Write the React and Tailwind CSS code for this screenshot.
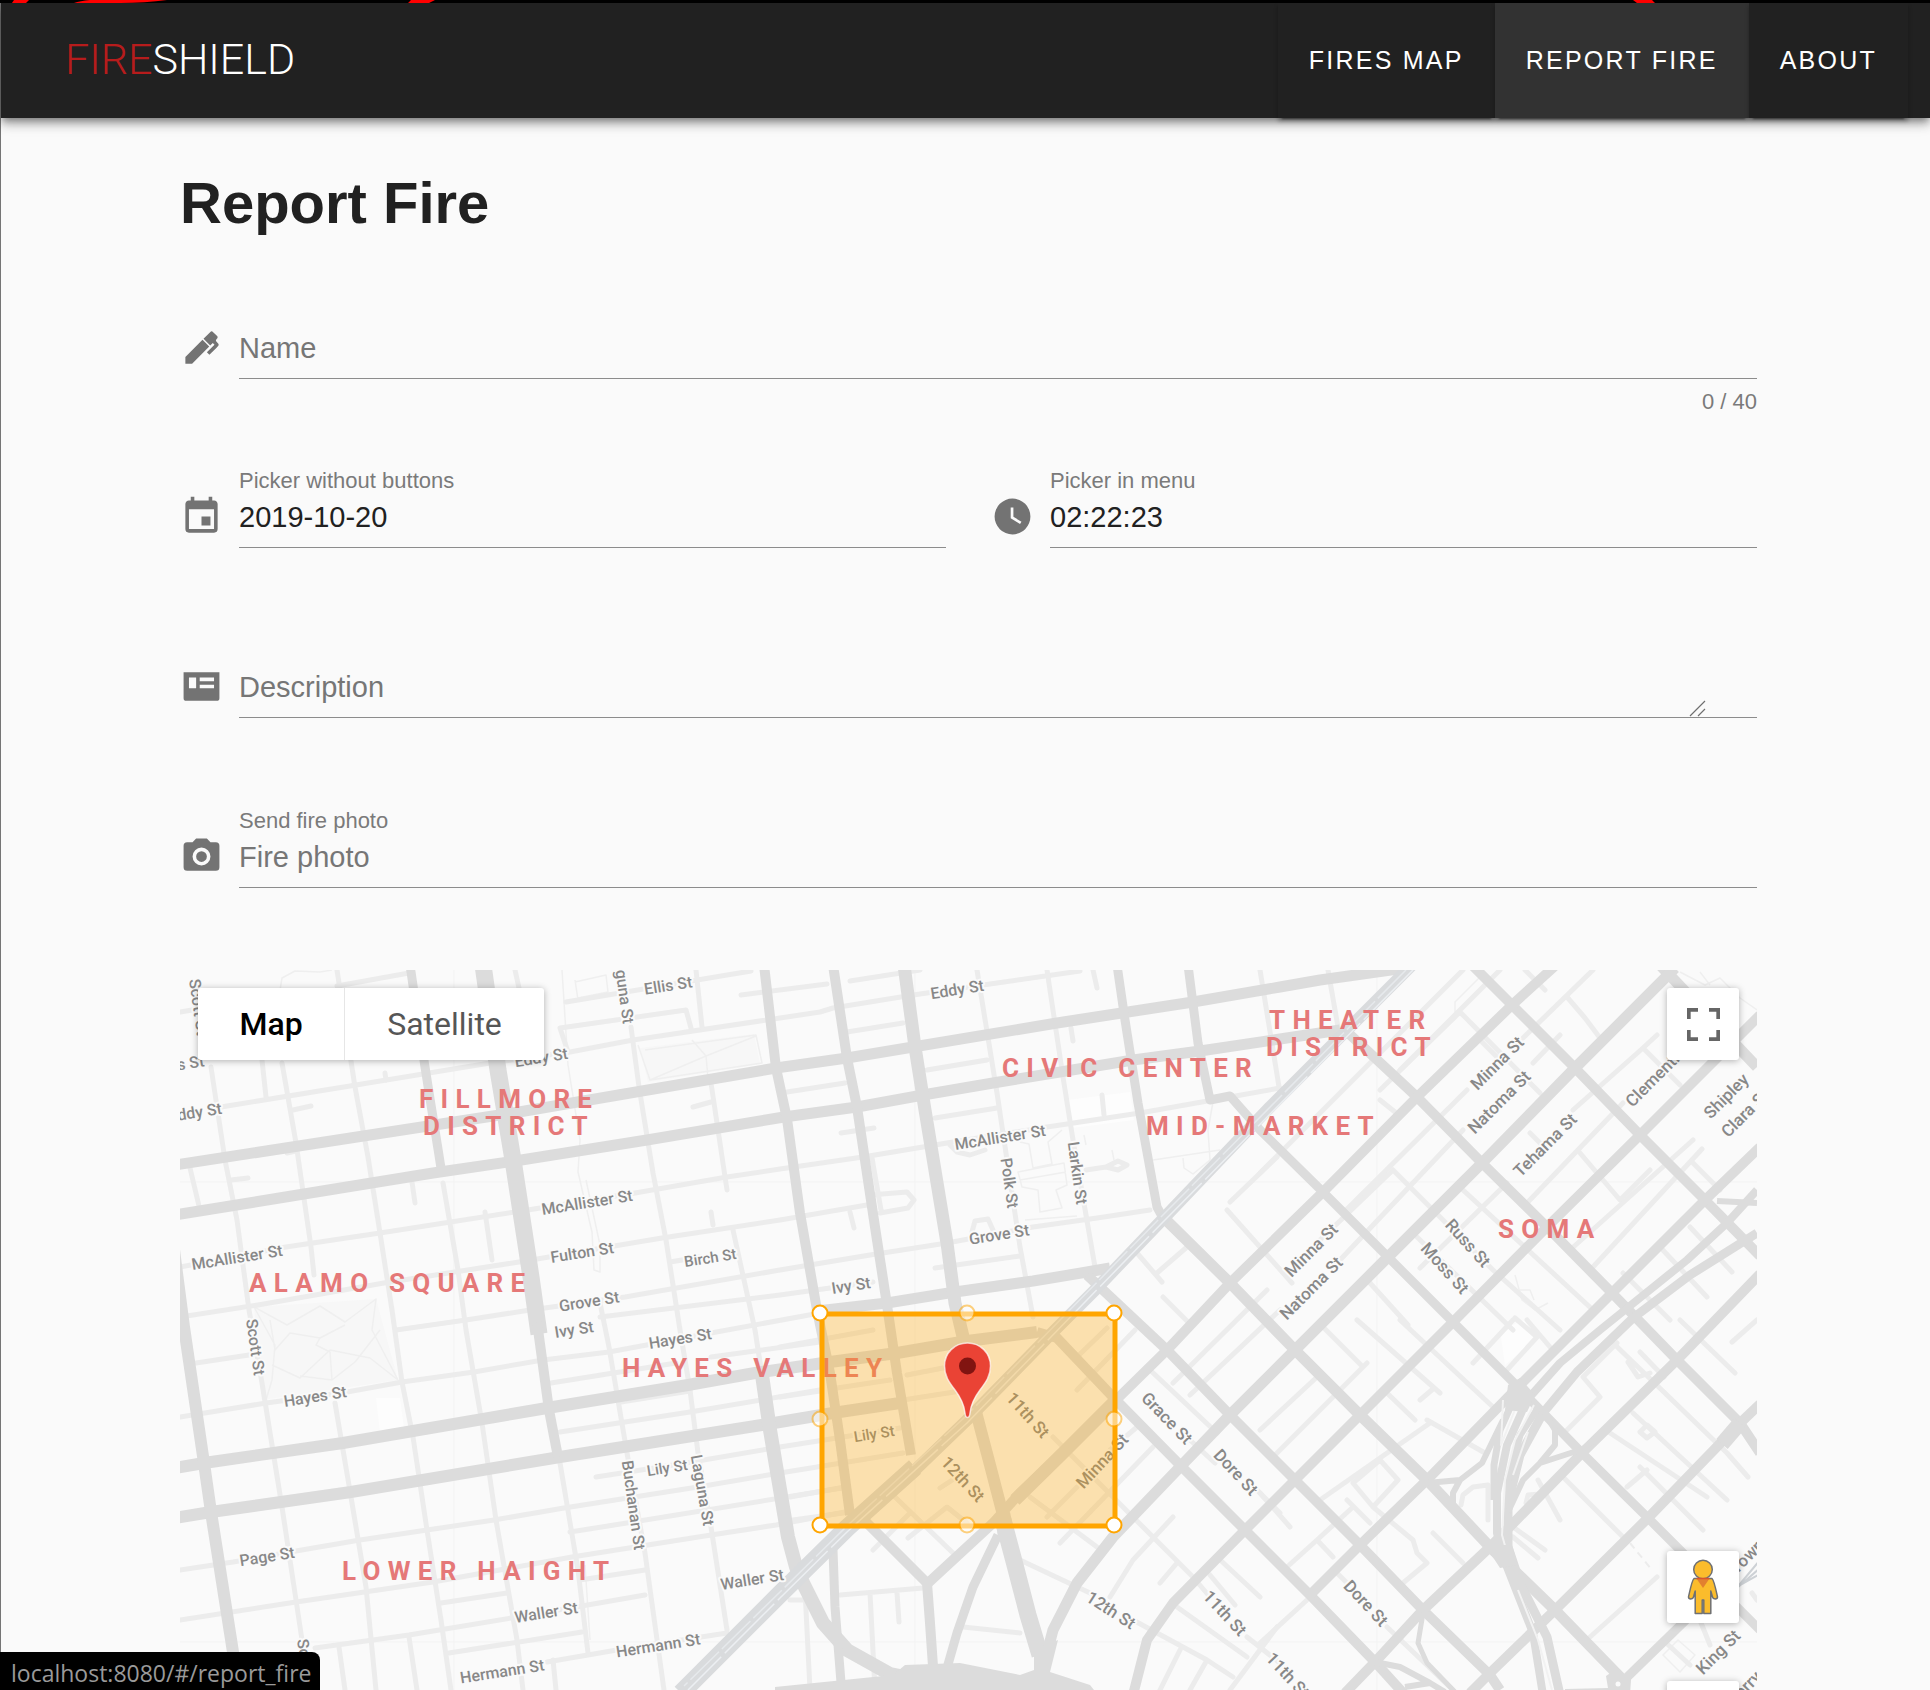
import React from "react";

const ARIAL = "font-['Liberation_Sans',Arial,sans-serif]";

/* ---------- form ---------- */

const ICONS = {
  pen: "M20.71,7.04C20.37,7.38 20.04,7.71 20.03,8.04C20,8.36 20.34,8.69 20.66,9C21.14,9.5 21.61,9.95 21.59,10.44C21.57,10.93 21.06,11.44 20.55,11.94L16.42,16.08L15,14.66L19.25,10.42L18.29,9.46L16.87,10.87L13.12,7.12L16.96,3.29C17.35,2.9 18,2.9 18.37,3.29L20.71,5.63C21.1,6 21.1,6.65 20.71,7.04M3,17.25L12.56,7.68L16.31,11.43L6.75,21H3V17.25Z",
  calendar:
    "M19,19H5V8H19M16,1V3H8V1H6V3H5C3.89,3 3,3.89 3,5V19A2,2 0 0,0 5,21H19A2,2 0 0,0 21,19V5C21,3.89 20.1,3 19,3H18V1M17,12H12V17H17V12Z",
  clock:
    "M12,2A10,10 0 0,0 2,12A10,10 0 0,0 12,22A10,10 0 0,0 22,12A10,10 0 0,0 12,2M16.2,16.2L11,13V7H12.5V12.2L17,14.9L16.2,16.2Z",
  card: "M2 4H22V18.5A1.5 1.5 0 0 1 20.5 20H3.5A1.5 1.5 0 0 1 2 18.5ZM5 7V13H9V7ZM11 7V9H19V7ZM11 11V13H19V11Z",
  camera:
    "M4,4H7L9,2H15L17,4H20A2,2 0 0,1 22,6V18A2,2 0 0,1 20,20H4A2,2 0 0,1 2,18V6A2,2 0 0,1 4,4M12,7A5,5 0 0,0 7,12A5,5 0 0,0 12,17A5,5 0 0,0 17,12A5,5 0 0,0 12,7M12,9A3,3 0 0,1 15,12A3,3 0 0,1 12,15A3,3 0 0,1 9,12A3,3 0 0,1 12,9Z",
};

function Field({ icon, id, label, hint, children }) {
  return (
    <div className="flex gap-4">
      <svg viewBox="0 0 24 24" className="mt-[25px] size-[43px] shrink-0 text-[#737373]" aria-hidden="true">
        <path d={ICONS[icon]} fill="currentColor" fillRule="evenodd" />
      </svg>
      <div className="min-w-0 grow">
        <div className="h-[22px] text-[22px] leading-[22px] text-[#7a7a7a]">
          {label && <label htmlFor={id}>{label}</label>}
        </div>
        <div className="flex h-[56px] items-start border-b border-[#8c8c8c] pt-[5px]">{children}</div>
        {hint && <p className="mt-3 text-right text-[22px] leading-[22px] text-[#7a7a7a]">{hint}</p>}
      </div>
    </div>
  );
}

const INPUT =
  "block h-10 w-full min-w-0 bg-transparent text-[29px] leading-10 text-[#212121] outline-none placeholder:text-[#767676] placeholder:opacity-100";

/* ---------- map ---------- */

const MINOR = [
  "M180 1012L198 1009 M337 986L409 973 M566 1002L751 971 M221 1107L356 1085L490 1063L570 1052L633 1040L820 1012L833 1008L913 995L997 983L1080 971",
  "M560 1028L686 1010L691 1028 M560 1028L568 1052 M741 995L827 984 M850 981L920 970 M847 1032L903 1023 M787 1092L845 1083 M927 1070L987 1060 M935 1118L997 1108",
  "M180 1267L286 1247L380 1233L515 1212L635 1193L727 1177L780 1169L863 1157L947 1143L1047 1127L1140 1113L1213 1100L1280 1088",
  "M180 1317L258 1305L384 1283L519 1262L662 1238L780 1220L867 1205",
  "M196 1363L249 1355 M396 1330L466 1320L530 1310L625 1297L780 1270L870 1255L947 1243L1033 1227L1097 1218L1150 1210",
  "M600 1317L780 1295L873 1282 M670 1262L700 1257",
  "M180 1417L266 1403L347 1392L402 1382L474 1372L543 1360L609 1352L711 1333L820 1313",
  "M551 1383L676 1363 M560 1432L690 1412L820 1390 M621 1402L690 1391 M711 1357L820 1342 M596 1477L686 1463L780 1447L900 1428",
  "M180 1570L233 1562L290 1552L360 1540L494 1520L564 1508L698 1487L780 1473L903 1453 M570 1532L633 1522L848 1487",
  "M180 1620L296 1602L433 1582L572 1557L711 1535L776 1525L845 1512",
  "M315 1648L409 1635L511 1618L576 1607L645 1595 M441 1603L507 1593 M580 1580L645 1570 M449 1653L582 1632 M547 1662L617 1650L727 1633",
  "M211 1067L225 1160L237 1220L249 1310L262 1383L282 1507L296 1600L302 1640 M262 1060L266 1097 M190 1168L199 1206 M282 1063L296 1143L311 1247L314 1275",
  "M337 970L355 1087L368 1157L380 1233L392 1310L402 1382L413 1437L427 1530L441 1620L451 1690",
  "M443 1183L458 1270L466 1330L482 1423L496 1520L507 1583L517 1640L523 1690 M335 1403L351 1497L366 1587L376 1690 M560 1463L578 1570L588 1653",
  "M485 1212L492 1260 M412 1182L415 1203 M287 1153L296 1151 M231 1180L248 1178 M293 1110L311 1106 M385 1073L386 1080",
  "M631 1027L639 1087L653 1173L666 1240L680 1330L690 1390L698 1453L711 1527L727 1630 M600 1303L609 1347L627 1453L645 1553L664 1690",
  "M696 970L702 1027 M711 1083L727 1190 M733 1230L755 1330L762 1375 M515 970L519 988 M711 1212L713 1225 M693 1107L711 1102",
  "M977 970L997 1093L1020 1247L1033 1317 M1047 970L1063 1077L1073 1140L1095 1267 M1260 970L1280 1093 M1093 970L1097 988 M1071 1028L1073 1041 M1328 970L1338 1027",
  "M339 1647L345 1690 M409 1637L417 1690 M553 1660L556 1690 M805 1590L810 1690 M870 1593L875 1690 M897 1593L899 1622 M840 1595L923 1588 M963 1627L1020 1633 M790 1600L815 1600",
  "M841 1133L874 1128 M850 1212L854 1228 M870 1195L907 1192L914 1200L908 1208L880 1213 M872 1158L881 1210 M950 1145L957 1152L970 1155L985 1150 M972 1232L975 1221L988 1219L993 1230 M935 1268L1020 1256 M1102 1095L1104 1115 M1086 1170L1106 1167L1118 1161L1127 1165L1118 1170L1106 1167",
  "M780 1347L873 1330 M780 1397L820 1391 M837 1388L890 1380 M907 1375L943 1368 M903 1400L967 1390 M790 1497L845 1487 M793 1520L843 1513",
  "M1260 1173L1463 970 M1380 1090L1460 1012L1540 1093 M1343 1213L1467 1090 M1523 1038L1593 970 M1340 1260L1463 1130 M1533 1063L1560 1035 M1573 1110L1643 1048L1657 1035 M1643 1048L1680 1085",
  "M1507 1183L1420 1268 M1527 1203L1623 1103 M1570 1250L1693 1140 M1593 1267L1702 1149 M1393 1170L1493 1270L1560 1330 M1463 1190L1593 1310 M1393 1170L1320 1240 M1417 1237L1513 1330",
  "M1567 997L1585 1018L1600 1038 M1580 1153L1620 1200L1650 1170 M1693 1163L1720 1190 M1370 1283L1408 1325 M1623 1273L1670 1320 M1660 1247L1707 1297 M1690 1227L1732 1272 M1227 1210L1292 1283 M1137 1253L1162 1282 M1157 1273L1187 1247 M1277 1157L1230 1202 M1163 1297L1188 1322 M1500 970L1400 1070 M1380 1100L1395 1112 M1525 970L1545 990 M1480 1040L1497 1057 M1530 1133L1545 1148",
  "M1323 1327L1363 1367 M1260 1430L1317 1377 M1273 1457L1367 1363 M1357 1320L1440 1393 M1420 1400L1433 1389 M1400 1320L1493 1407 M1387 1393L1415 1420 M1320 1500L1430 1423 M1427 1420L1485 1453 M1473 1363L1513 1320 M1507 1370L1537 1337L1515 1318 M1527 1320L1550 1347",
  "M1563 1477L1623 1537 M1538 1480L1560 1520 M1513 1527L1545 1550 M1513 1537L1538 1558 M1590 1637L1657 1577 M1567 1430L1600 1397L1583 1377L1617 1343 M1610 1340L1727 1453L1748 1477 M1633 1413L1727 1500 M1610 1433L1707 1497 M1627 1487L1647 1470 M1640 1467L1703 1530 M1680 1320L1735 1373 M1732 1342L1757 1320 M1640 1352L1664 1377 M1628 1362L1638 1377L1650 1373",
  "M1347 1500L1370 1523 M1353 1483L1380 1460L1398 1480L1373 1507Z M1373 1507L1413 1540L1417 1553L1427 1563L1403 1583 M1433 1533L1463 1563 M1287 1567L1317 1540L1353 1507 M1317 1540L1333 1557 M1260 1643L1307 1600 M1337 1573L1347 1583 M1387 1627L1453 1690 M1260 1493L1290 1527 M1461 1505L1463 1495L1473 1487L1488 1485L1488 1520 M1640 1432L1647 1425L1655 1432L1647 1438Z M1526 1503L1528 1495L1540 1494 M1663 1640L1690 1665 M1695 1608L1710 1645 M1752 1593L1757 1600",
  "M1150 1370L1217 1433 M1190 1440L1215 1463 M1257 1490L1280 1513 M1173 1383L1267 1290 M1190 1395L1280 1310 M1137 1427L1110 1450 M1153 1447L1060 1543 M1047 1517L1077 1487 M1173 1517L1133 1560L1110 1597 M1053 1437L1113 1497L1193 1577L1210 1597 M1030 1497L1097 1547",
  "M1020 1560L1090 1593 M1133 1620L1207 1660L1233 1677 M1177 1607L1247 1657 M1247 1637L1280 1663 M1217 1557L1260 1597 M1177 1563L1160 1583 M1180 1650L1160 1690 M1207 1660L1190 1690 M1277 1627L1230 1690 M1210 1575L1235 1605",
  "M873 1550L910 1513 M895 1497L953 1553 M908 1538L947 1507L967 1523 M1077 1390L1135 1330 M1077 1357L1107 1328 M940 1488L960 1475",
];

const THIN = [
  "M254 1307L287 1325L320 1306L345 1322L376 1299L372 1330L398 1380 M270 1320L275 1350L290 1333L320 1338L345 1325 M254 1307L275 1345L272 1380L266 1400 M272 1365L300 1378L330 1350L370 1358L398 1380 M320 1338L316 1345L330 1352L332 1380L300 1376 M332 1380L355 1362L380 1330",
  "M562 970L568 1065L580 1140L578 1172L592 1232L594 1270L600 1272L600 1245L586 1180 M575 980L578 1000 M575 982L606 975L608 992L578 998",
  "M638 1045L650 1080L762 1063L756 1035L645 1050 M650 1080L706 1056L756 1036 M706 1056L708 1078 M692 1040L706 1056",
  "M1020 1142L1029 1144L1033 1168L1052 1164L1048 1142L1062 1130 M1018 1172L1064 1163L1067 1185L1056 1190L1062 1208L1040 1212L1038 1190L1022 1187Z M1020 1180L1066 1172 M1025 1220L1077 1216",
  "M1153 1160L1220 1150 M1183 1158L1184 1168L1193 1174L1210 1160L1208 1130L1213 1102 M1112 1150L1114 1160 M1084 1135L1086 1145",
  "M1455 1012L1455 1002L1480 977 M1680 972L1705 985L1720 978L1740 998L1757 1010 M1700 972L1710 985 M1515 1275L1522 1300L1535 1310L1548 1303 M1520 1290L1530 1290L1534 1300",
  "M1663 1655L1678 1640L1695 1655L1680 1672Z M1670 1648L1687 1664 M585 1565L590 1640 M280 990L282 978L295 971L320 972L332 970",
];

/* [stroke width, path] */
const MAJOR = [
  [11, "M175 1165L519 1112L776 1068L847 1058L913 1047L1057 1023L1193 1002L1280 987L1320 980L1405 968"],
  [11, "M175 1215L433 1173L515 1161L647 1140L784 1117L857 1107L923 1095L993 1083L1133 1060L1200 1051L1280 1039L1340 1030"],
  [12, "M175 1468L204 1463L343 1443L547 1408L688 1385L755 1373L830 1362L897 1353L967 1341L1037 1332"],
  [12, "M175 1518L211 1512L351 1492L560 1457L768 1424L833 1413L900 1403"],
  [11, "M817 1311L887 1303L955 1292L1033 1281L1087 1272L1110 1268"],
  [12, "M174 1250L184 1327L204 1463L211 1512L233 1652L238 1695"],
  [9, "M410 965L425 1067L441 1168"],
  [17, "M483 965L498 1070L513 1160L531 1277L539 1334"],
  [10, "M537 1322L549 1410L558 1457"],
  [10, "M764 965L776 1068L787 1119L800 1213L817 1310L830 1373L840 1440L850 1515"],
  [10, "M833 965L847 1058L857 1107L875 1227L887 1305L897 1373L911 1455"],
  [13, "M904 965L915 1047L925 1110L947 1243L955 1303L965 1345"],
  [12, "M975 1408L990 1465L1003 1515"],
  [14, "M762 1375L770 1430L788 1537L796 1567L803 1583L823 1623L847 1650L890 1674L930 1682"],
  [9, "M1117 965L1125 1020L1138 1103L1157 1207L1163 1218"],
  [9, "M1188 965L1198 1043L1210 1100L1230 1096L1260 1130L1323 1192L1388 1257L1453 1322L1518 1387L1582 1453L1648 1518L1690 1560L1760 1630"],
  [10, "M1345 1030L1417 1097L1482 1163L1547 1227L1612 1293L1677 1360L1740 1423L1760 1453"],
  [10, "M1472 965L1512 1005L1575 1068L1640 1135L1705 1200L1760 1256"],
  [11, "M1660 965L1757 1067"],
  [11, "M1163 1217L1230 1283L1295 1350L1360 1415L1427 1480L1490 1547L1555 1610L1620 1677"],
  [10, "M1087 1275L1167 1350L1230 1415L1295 1480L1360 1545L1423 1610L1490 1675L1500 1690"],
  [10, "M1037 1332L1057 1338L1113 1397L1180 1465L1245 1530L1310 1595L1375 1662L1405 1695"],
  [10, "M1556 965L1512 1005L1417 1097L1323 1192L1230 1283L1167 1350L1113 1403L1063 1453L1020 1493L993 1523L927 1584"],
  [13, "M1113 1403L1063 1453L1015 1500"],
  [11, "M1675 968L1575 1068L1482 1163L1388 1257L1295 1350L1230 1415L1180 1467L1113 1537L1077 1583L1053 1630L1043 1668"],
  [10, "M1760 1015L1640 1135L1547 1227L1453 1322L1360 1415L1295 1480L1245 1530L1173 1603L1147 1640L1133 1695"],
  [10, "M1760 1147L1705 1200L1612 1293L1518 1387L1427 1480L1360 1545L1310 1595"],
  [10, "M1760 1274L1677 1360L1582 1453L1490 1547L1423 1610L1375 1662L1345 1693"],
  [10, "M1760 1404L1740 1423L1648 1518L1555 1610L1490 1673L1470 1693"],
  [15, "M1740 1423L1722 1444"],
  [9, "M1690 1616L1618 1686"],
  [9, "M833 1550L835 1607L842 1695"],
  [10, "M862 1518L927 1583L930 1623L935 1695"],
  [9, "M998 1535L973 1587L957 1633L945 1675"],
  [17, "M1003 1520L1015 1565L1028 1615L1040 1655"],
  [6, "M1717 1201L1757 1203"],
  [8, "M1757 1190L1727 1223L1687 1260L1600 1330L1560 1363L1527 1400L1507 1445L1497 1493L1497 1533L1507 1567L1533 1633L1543 1695"],
  [9, "M1757 1233L1690 1275L1633 1318L1577 1372L1543 1413L1520 1455L1508 1503L1508 1547L1520 1583L1547 1637L1560 1695"],
  [7, "M1518 1390L1500 1430L1494 1465L1494 1500 M1540 1405L1520 1435L1508 1480L1508 1510"],
  [6, "M1545 1413L1555 1430L1555 1445L1540 1463L1523 1480L1508 1512 M1540 1463L1583 1449L1600 1435"],
  [6, "M1427 1483L1460 1480L1482 1463L1503 1420 M1460 1480L1453 1493L1453 1510"],
  [5, "M1423 1613L1418 1643L1427 1663L1455 1692"],
  [6, "M1375 1662L1400 1667L1430 1683L1445 1692 M1405 1687L1430 1683"],
];

/* [text, x, y, angle, small] */
const STREETS = [
  ["Eddy St", 957, 989, -9], ["McAllister St", 1000, 1137, -9], ["Grove St", 999, 1234, -9], ["Ivy St", 851, 1285, -9],
  ["Polk St", 1010, 1183, 82], ["Larkin St", 1078, 1173, 82], ["Ellis St", 668, 985, -9], ["Laguna St", 624, 988, 82],
  ["Eddy St", 541, 1057, -9], ["Scott St", 199, 1007, 82], ["Ellis St", 180, 1064, -9], ["Eddy St", 195, 1112, -9],
  ["McAllister St", 237, 1257, -9], ["McAllister St", 587, 1202, -9], ["Fulton St", 582, 1252, -9], ["Grove St", 589, 1301, -9],
  ["Birch St", 710, 1257, -9, "s"], ["Ivy St", 574, 1329, -9], ["Scott St", 256, 1347, 82], ["Hayes St", 315, 1396, -9],
  ["Hayes St", 680, 1338, -9], ["Lily St", 667, 1467, -9, "s"], ["Buchanan St", 634, 1505, 82], ["Laguna St", 703, 1490, 80],
  ["Page St", 267, 1556, -9], ["Waller St", 546, 1612, -9], ["Waller St", 752, 1579, -9], ["Hermann St", 502, 1671, -9],
  ["Hermann St", 658, 1645, -9], ["Scott St", 307, 1667, 82], ["Lily St", 874, 1433, -9, "s"], ["11th St", 1028, 1415, 48],
  ["12th St", 963, 1479, 47], ["Minna St", 1102, 1461, -47], ["Grace St", 1167, 1418, 46], ["Dore St", 1236, 1472, 47],
  ["12th St", 1111, 1610, 33], ["11th St", 1225, 1613, 47], ["11th St", 1288, 1675, 47], ["Dore St", 1366, 1603, 47],
  ["Minna St", 1497, 1063, -45], ["Natoma St", 1499, 1102, -45], ["Tehama St", 1545, 1145, -45], ["Clementina St", 1666, 1066, -45],
  ["Shipley", 1726, 1096, -45], ["Clara St", 1745, 1113, -45], ["Minna St", 1311, 1250, -45], ["Natoma St", 1311, 1288, -45],
  ["Russ St", 1468, 1243, 48], ["Moss St", 1445, 1268, 48], ["Townsend St", 1767, 1536, -45], ["King St", 1718, 1652, -45],
  ["Berry St", 1751, 1681, -45],
];

function streetClass(angle, small) {
  if (small) return "text-[15px] font-medium";
  return angle === -9 || angle > 50 ? "text-[16px] font-medium" : "text-[17px] font-medium";
}

const DISTRICTS = [
  ["FILLMORE", 419, 1108], ["DISTRICT", 423, 1135], ["ALAMO SQUARE", 249, 1292], ["HAYES VALLEY", 622, 1377],
  ["LOWER HAIGHT", 342, 1580], ["CIVIC CENTER", 1002, 1077], ["THEATER", 1269, 1029], ["DISTRICT", 1266, 1056],
  ["MID-MARKET", 1146, 1135], ["SOMA", 1498, 1238],
];

const CORNERS = [[820, 1313], [1114, 1313], [820, 1525], [1114, 1525]];
const MIDPOINTS = [[967, 1313], [820, 1419], [1114, 1419], [967, 1525]];

function MapDrawing() {
  return (
    <svg
      viewBox="180 970 1577 720"
      preserveAspectRatio="xMidYMin slice"
      className="block size-full font-[Roboto,sans-serif]"
      role="img"
      aria-label="Street map of the fire area"
    >
      <rect x="0" y="900" width="2200" height="900" fill="#fafafa" />
      <path d="M376 1398L400 1398L404 1428L380 1432Z M1500 1330L1525 1320L1535 1340L1505 1365Z M1067 1100L1130 1092L1134 1120L1072 1128Z" fill="#fdfdfd" />
      <path d="M254 1307L376 1299L398 1380L262 1400Z M640 1048L754 1034L760 1064L648 1082Z" fill="#f7f7f7" />
      <g fill="none" strokeLinejoin="round">
        <path d="M180 1182H1757 M180 1642H1757 M454 970V1690 M915 970V1690 M1377 970V1690" stroke="#f3f3f3" strokeWidth="1" />
        <g stroke="#efefef" strokeWidth="1.5">
          {THIN.map((d) => <path key={d} d={d} />)}
        </g>
        <g stroke="#ececec" strokeWidth="5" strokeLinecap="round">
          {MINOR.map((d) => <path key={d} d={d} />)}
        </g>
        <g stroke="#dcdcdc">
          {MAJOR.map(([w, d]) => <path key={d} d={d} strokeWidth={w} />)}
        </g>
        <path d="M1412 965L1340 1037L1270 1107L1163 1219L1095 1290L1053 1332L967 1420L910 1475" stroke="#d9dbdd" strokeWidth="12" />
        <path d="M915 1467L847 1528L780 1594L681 1693" stroke="#d9dbdd" strokeWidth="18" />
        <path d="M1413 970L1163 1222L967 1423L847 1532L780 1598L688 1690" stroke="#eceff2" strokeWidth="1.5" strokeDasharray="70 5" />
        <path d="M1406 970L1160 1218L965 1417L847 1526L780 1592L684 1686" stroke="#e6e9ec" strokeWidth="1.5" strokeDasharray="40 4" />
        <path d="M1518 1402L1501 1445L1503 1400 M1534 1405L1515 1440L1505 1480L1502 1535L1509 1560 M1528 1432L1513 1475 M1518 1590L1538 1640L1552 1690" stroke="#f2f2f2" strokeWidth="2" />
        <path d="M1630 1543L1652 1570" stroke="#ececec" strokeWidth="2" strokeDasharray="7 5" />
        <path d="M1735 1590L1760 1560 M1737 1588L1760 1568 M1740 1585L1760 1574" stroke="#cdd1d5" strokeWidth="2" />
      </g>
      <path d="M775 1687L893 1675L905 1665L960 1663L1020 1675L1034 1670L1034 1650L1058 1640L1050 1672L1090 1685L1098 1695H775Z M996 1515L1010 1512L1016 1540L998 1540Z M1508 1385L1520 1378L1535 1395L1527 1412L1505 1410Z M1485 1545L1512 1545L1518 1565L1500 1568Z" fill="#dcdcdc" />
      <path d="M1565 1689L1608 1688L1606 1676L1618 1668L1631 1680L1630 1695H1565Z" fill="#dcdcdc" />
      <circle cx="1618" cy="1684" r="2.5" fill="#fafafa" />

      <g textAnchor="middle" fill="#888888" stroke="#fafafa" strokeWidth="4" strokeLinejoin="round" paintOrder="stroke">
        {STREETS.map(([t, x, y, a, s], i) => (
          <text key={i} y="6" transform={`translate(${x} ${y}) rotate(${a})`} className={streetClass(a, s)}>
            {t}
          </text>
        ))}
      </g>
      <g fill="#e57878">
        {DISTRICTS.map(([t, x, y]) => (
          <text key={t + x} x={x} y={y} className="text-[26px] font-bold tracking-[0.28em]">
            {t}
          </text>
        ))}
      </g>

      <rect x="822" y="1314" width="293" height="212" fill="#ffa500" fillOpacity="0.3" stroke="#ffa500" strokeWidth="5" />
      <g fill="#ffffff" stroke="#ffa500" strokeWidth="2">
        {CORNERS.map(([x, y]) => <circle key={`${x}-${y}`} cx={x} cy={y} r="7.5" />)}
        <g opacity="0.5">
          {MIDPOINTS.map(([x, y]) => <circle key={`${x}-${y}`} cx={x} cy={y} r="7.5" />)}
        </g>
      </g>
      <path
        d="M967.500 1343C954.500 1343 944.500 1353 944.500 1366C944.500 1376 949 1382 955 1390C961 1398 964 1404 965 1413C965.500 1419 969.500 1419 970 1413C971 1404 974 1398 980 1390C986 1382 990.500 1376 990.500 1366C990.500 1353 980.500 1343 967.500 1343Z"
        fill="#ea4335"
        stroke="#ffffff"
        strokeOpacity="0.7"
        strokeWidth="1.5"
      />
      <circle cx="967.5" cy="1366" r="8.5" fill="#811411" />
    </svg>
  );
}

const MAP_BUTTON = "grid size-[72px] place-items-center rounded-[3px] bg-white shadow-[0_1px_7px_rgba(0,0,0,0.3)]";

function FireMap() {
  return (
    <section className="relative h-[720px] overflow-hidden" aria-label="Map">
      <MapDrawing />
      <div className="absolute top-[18px] left-[18px] flex h-[72px] rounded-[3px] bg-white font-[Roboto,sans-serif] text-[32px] shadow-[0_1px_7px_rgba(0,0,0,0.3)]">
        <button type="button" className="w-[147px] border-r border-[#e6e6e6] font-medium text-black">Map</button>
        <button type="button" className="w-[199px] text-[#565656]">Satellite</button>
      </div>
      <div className="absolute top-[18px] right-[18px]">
        <button type="button" aria-label="Toggle fullscreen view" className={MAP_BUTTON}>
          <svg viewBox="0 0 18 18" className="size-[33px]" fill="#666666" aria-hidden="true">
            <path d="M0 0V6H2V2H6V0ZM16 0H12V2H16V6H18V0ZM16 16H12V18H18V12H16ZM2 12H0V18H6V16H2Z" />
          </svg>
        </button>
      </div>
      <div className="absolute top-[581px] right-[18px] flex flex-col gap-[58px]">
        <button type="button" aria-label="Street View" className={MAP_BUTTON}>
          <svg viewBox="0 0 32 56" className="h-[56px] w-[32px]" aria-hidden="true">
            <g fill="#fbbc2c" stroke="#6f7072" strokeWidth="1.5" strokeLinejoin="round">
              <path d="M7 19.500H25C27 21 29 31 30.500 38C30.500 40.500 26 40.500 25.500 38L23.800 32V54.500H16.800V41H15.200V54.500H8.200V32L6.500 38C6 40.500 1.500 40.500 1.500 38C3 31 5 21 7 19.500Z" />
              <circle cx="16" cy="10.500" r="9.300" />
            </g>
            <path d="M9.500 19.500H22.500L16 29Z" fill="#e2802f" />
            <path d="M9.500 19.500H22.500" stroke="#d9532c" strokeWidth="1.500" />
          </svg>
        </button>
        <button type="button" aria-label="Zoom in" className={MAP_BUTTON} />
      </div>
    </section>
  );
}

/* ---------- page ---------- */

const NAV = [
  ["FIRES MAP", "#/fires_map", false],
  ["REPORT FIRE", "#/report_fire", true],
  ["ABOUT", "#/about", false],
];

export default function App() {
  return (
    <div className={`${ARIAL} min-h-screen bg-[#fafafa] text-[#212121]`}>
      <div className="h-[3px] overflow-hidden bg-black">
        <svg viewBox="0 0 1930 3" preserveAspectRatio="xMinYMin slice" className="block h-[3px] w-full" fill="#ff0000" aria-hidden="true">
          <path d="M14 0H29L26 3H12Z M90 0H167Q145 3 120 3H74Q80 1 90 0Z M411 0H435L429 3H408Z M1633 0H1652L1655 3H1637Z" />
        </svg>
      </div>
      <div className="border-l border-[#757575]">
        <header className="flex h-[115px] items-stretch justify-between bg-[#212121] pr-[22px] pl-16 shadow-[0_4px_7px_-2px_rgba(0,0,0,0.35),0_7px_9px_rgba(0,0,0,0.2),0_2px_18px_rgba(0,0,0,0.12)]">
          <a href="#/" className="flex items-center pb-0.5 font-[Roboto,sans-serif] text-[43px] leading-none font-light text-white">
            <span className="text-[#b71c1c]">FIRE</span>
            <span>SHIELD</span>
          </a>
          <nav className="flex">
            {NAV.map(([text, href, active]) => (
              <a
                key={text}
                href={href}
                aria-current={active ? "page" : undefined}
                className={`flex items-center px-[31px] text-[25px] tracking-[0.09em] text-white shadow-[0_5px_2px_-4px_rgba(0,0,0,0.5),0_3px_4px_rgba(0,0,0,0.3)] ${active ? "bg-[#323232]" : "bg-[#212121]"}`}
              >
                {text}
              </a>
            ))}
          </nav>
        </header>

        <main className="pt-14 pr-[173px] pl-[179px]">
          <h1 className="text-[58px] leading-[58px] font-bold">Report Fire</h1>

          <form className="mt-[69px]">
            <Field icon="pen" id="name" hint="0 / 40">
              <input id="name" type="text" aria-label="Name" placeholder="Name" maxLength={40} className={INPUT} />
            </Field>
            <div className="mt-[57px] grid grid-cols-2 gap-[45px]">
              <Field icon="calendar" id="date" label="Picker without buttons">
                <input id="date" type="text" readOnly defaultValue="2019-10-20" className={INPUT} />
              </Field>
              <Field icon="clock" id="time" label="Picker in menu">
                <input id="time" type="text" readOnly defaultValue="02:22:23" className={INPUT} />
              </Field>
            </div>
            <div className="mt-[92px]">
              <Field icon="card" id="description">
                <textarea id="description" aria-label="Description" placeholder="Description" rows={1} className={`${INPUT} resize-none overflow-hidden`} />
                <svg viewBox="0 0 18 18" className="mr-[50px] size-[18px] shrink-0 self-end" stroke="#6f6f6f" strokeWidth="1.2" aria-hidden="true">
                  <path d="M1 17L16 2 M9 17L16 10" />
                </svg>
              </Field>
            </div>
            <div className="mt-[92px]">
              <Field icon="camera" id="photo" label="Send fire photo">
                <input id="photo" type="text" readOnly placeholder="Fire photo" className={INPUT} />
              </Field>
            </div>
          </form>

          <div className="mt-[82px]">
            <FireMap />
          </div>
        </main>
      </div>

      <div className="fixed bottom-0 left-0 flex h-[38px] w-[320px] items-center rounded-tr-lg bg-black pt-1 pl-[11px] font-['Open_Sans','Noto_Sans',sans-serif] text-[23px] leading-none whitespace-nowrap text-[#9a9a9a]">
        localhost:8080/#/report_fire
      </div>
    </div>
  );
}
